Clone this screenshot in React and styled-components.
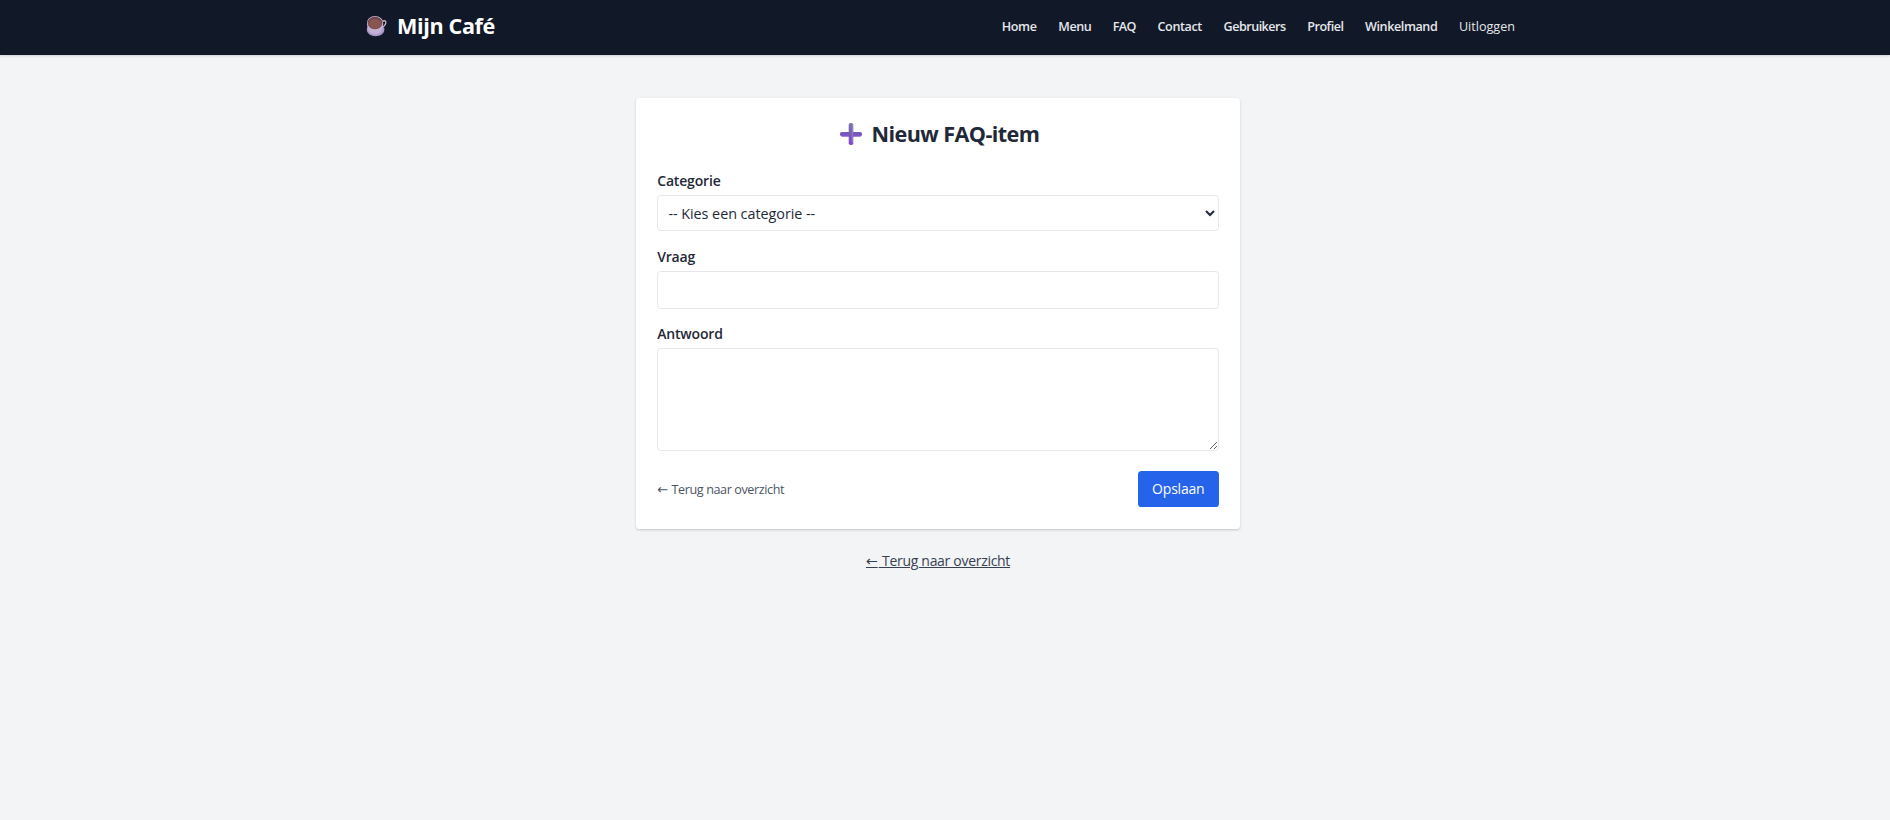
import React from 'react';
import styled, { createGlobalStyle } from 'styled-components';

const GlobalStyle = createGlobalStyle`
  *, *::before, *::after { box-sizing: border-box; }
  body {
    margin: 0;
    min-height: 100vh;
    background: #f3f4f6;
    color: #1f2937;
    font-family: "Open Sans", "Noto Sans", sans-serif;
    font-size: 14.4px;
    line-height: 21.6px;
  }
`;

const Header = styled.header`
  height: 55px;
  padding-right: 12px;
  background: #111827;
  box-shadow: 0 1px 3px rgba(0, 0, 0, 0.1), 0 1px 2px rgba(0, 0, 0, 0.06);
`;

const HeaderInner = styled.div`
  display: flex;
  align-items: center;
  justify-content: space-between;
  max-width: 1152px;
  height: 53px;
  margin: 0 auto;
`;

const Brand = styled.a`
  display: flex;
  align-items: center;
  gap: 9px;
  padding: 0 0 2px 3px;
  color: #fff;
  font-size: 21.6px;
  font-weight: 700;
  line-height: 28px;
  letter-spacing: -0.37px;
`;

const Nav = styled.nav`
  display: flex;
  gap: 21.6px;
`;

const NavLink = styled.a`
  color: #e5e7eb;
  font-size: 12.6px;
  font-weight: ${(p) => (p.$plain ? 400 : 600)};
  letter-spacing: ${(p) => p.$tracking}px;
  white-space: nowrap;
`;

const Main = styled.main`
  display: flex;
  flex-direction: column;
  align-items: center;
  padding: 43px 14px 0 0;
`;

const Card = styled.section`
  width: 604.8px;
  height: 431px;
  padding: 21.6px;
  background: #fff;
  border-radius: 3.6px;
  box-shadow: 0 1px 3px rgba(0, 0, 0, 0.1), 0 1px 2px rgba(0, 0, 0, 0.1);
`;

const Title = styled.h1`
  display: flex;
  align-items: center;
  justify-content: center;
  gap: 10px;
  height: 29px;
  margin: 0 0 22.4px;
  padding-left: 3px;
  font-size: 21.6px;
  font-weight: 700;
  letter-spacing: -0.58px;
`;

const Field = styled.div`
  display: flex;
  flex-direction: column;
  margin-bottom: ${(p) => p.$gap}px;
`;

const Label = styled.label`
  height: 20px;
  line-height: 20px;
  margin-bottom: 4px;
  font-size: 14px;
  font-weight: 600;
  letter-spacing: -0.17px;
`;

const Select = styled.select`
  height: 36px;
  padding: 2px 7.2px 0 6.2px;
  border: 1px solid #e5e7eb;
  border-radius: 3.6px;
  background: #fff;
  color: #1f2937;
  font: inherit;
  letter-spacing: -0.05px;
`;

const Input = styled.input`
  height: 38px;
  padding: 7.2px;
  border: 1px solid #e5e7eb;
  border-radius: 3.6px;
  font: inherit;
`;

const TextArea = styled.textarea`
  display: block;
  height: 103px;
  padding: 7.2px;
  border: 1px solid #e5e7eb;
  border-radius: 3.6px;
  font: inherit;
  resize: vertical;
`;

const Actions = styled.div`
  display: flex;
  align-items: center;
  justify-content: space-between;
`;

const BackLink = styled.a`
  padding-top: 1px;
  color: #4b5563;
  font-size: 12.6px;
  letter-spacing: -0.4px;
`;

const PageBackLink = styled.a`
  margin-top: 21px;
  color: #374151;
  font-size: 14px;
  letter-spacing: -0.3px;
  text-decoration: underline;
  text-underline-offset: 1px;
`;

const Arrow = styled.span`
  margin-right: 1px;
  font-family: "DejaVu Sans", sans-serif;
  font-size: ${(p) => p.$size}px;
  line-height: 1;
`;

const SaveButton = styled.button`
  width: 81px;
  height: 36px;
  padding: 0;
  border: 0;
  border-radius: 3.6px;
  background: #2563eb;
  color: #fff;
  font: inherit;
  font-size: 14px;
  letter-spacing: -0.2px;
`;

function CoffeeIcon() {
  return (
    <svg width="22" height="22" viewBox="0 0 22 22" aria-hidden="true">
      <path d="M16 6.500c3.200-1.700 4.600-.3 3.600 2.300-.6 1.500-1.900 2.900-3.400 3.800" fill="none" stroke="#c9b8d4" strokeWidth="1.300" />
      <ellipse cx="9.600" cy="15" rx="8.800" ry="6.200" fill="#ac98c9" />
      <path d="M1 8C1 4 4.500 1 9 1s8.200 3 8.200 7c0 7.500-3 11.300-8 11.300S1 15.500 1 8Z" fill="#c3b2d5" />
      <ellipse cx="9" cy="8" rx="7.300" ry="6.200" fill="#71434a" />
      <ellipse cx="9" cy="9" rx="6.600" ry="5" fill="#875653" />
    </svg>
  );
}

function PlusIcon() {
  return (
    <svg width="22" height="22" viewBox="0 0 22 22" aria-hidden="true">
      <defs>
        <linearGradient id="plusFill" x1="0" y1="0" x2="0" y2="1">
          <stop offset="0" stopColor="#8176ad" />
          <stop offset="0.5" stopColor="#765bb2" />
          <stop offset="1" stopColor="#8247da" />
        </linearGradient>
      </defs>
      <rect x="0" y="9" width="22" height="4.400" rx="1.800" fill="#7559b8" />
      <path d="M1.500 12.800h19" stroke="#874be0" strokeWidth="1.200" />
      <rect x="8.700" y="0" width="4.600" height="22" rx="1.800" fill="url(#plusFill)" />
      <path d="M12.300 1.500v18" stroke="#9387bd" strokeWidth="1" />
    </svg>
  );
}

const links = [
  ['Home', -0.35],
  ['Menu', -0.5],
  ['FAQ', -0.6],
  ['Contact', -0.39],
  ['Gebruikers', -0.52],
  ['Profiel', -0.49],
  ['Winkelmand', -0.43],
];

export default function App() {
  return (
    <>
      <GlobalStyle />
      <Header>
        <HeaderInner>
          <Brand>
            <CoffeeIcon />
            <span>Mijn Café</span>
          </Brand>
          <Nav>
            {links.map(([label, tracking]) => (
              <NavLink key={label} $tracking={tracking}>{label}</NavLink>
            ))}
            <NavLink $plain $tracking={0}>Uitloggen</NavLink>
          </Nav>
        </HeaderInner>
      </Header>
      <Main>
        <Card>
          <Title>
            <PlusIcon />
            <span>Nieuw FAQ-item</span>
          </Title>
          <Field $gap={16}>
            <Label htmlFor="category">Categorie</Label>
            <Select id="category">
              <option>-- Kies een categorie --</option>
            </Select>
          </Field>
          <Field $gap={15}>
            <Label htmlFor="question">Vraag</Label>
            <Input id="question" />
          </Field>
          <Field $gap={20}>
            <Label htmlFor="answer">Antwoord</Label>
            <TextArea id="answer" />
          </Field>
          <Actions>
            <BackLink><Arrow $size={13}>←</Arrow> Terug naar overzicht</BackLink>
            <SaveButton type="button">Opslaan</SaveButton>
          </Actions>
        </Card>
        <PageBackLink><Arrow $size={14.400}>←</Arrow> Terug naar overzicht</PageBackLink>
      </Main>
    </>
  );
}
